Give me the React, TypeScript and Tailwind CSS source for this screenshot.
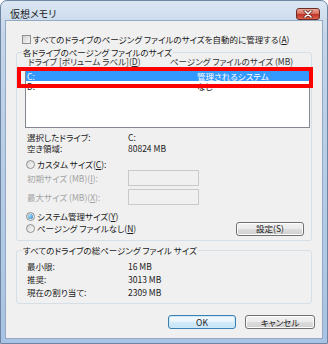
import React from 'react';

const jp = "font-['Noto_Sans_CJK_JP','Noto_Sans',sans-serif] [font-feature-settings:'palt']";

const Radio: React.FC<{ checked?: boolean }> = ({ checked }) => (
  <span className="w-[9px] h-[9px] shrink-0 rounded-full border border-[#8e8f8f] bg-[linear-gradient(135deg,#d6d6d6,#fbfbfb)] flex items-center justify-center">
    {checked && (
      <span className="w-[5px] h-[5px] rounded-full bg-[radial-gradient(circle_at_35%_35%,#a8e4ff,#1a6fc4)]" />
    )}
  </span>
);

const Button: React.FC<{ label: string; primary?: boolean; className?: string }> = ({ label, primary, className }) => (
  <div
    className={`h-[14px] rounded-[3px] border flex items-center justify-center text-[8.5px] text-[#1a1a1a] ${
      primary
        ? 'border-[#3c7fb1] bg-[linear-gradient(#f4fafd_0%,#e6f3fb_50%,#d3ebf9_50%,#c6e4f6_100%)] shadow-[inset_0_0_0_1px_#cde9f9]'
        : 'border-[#707070] bg-[linear-gradient(#f2f2f2_0%,#ebebeb_50%,#dddddd_50%,#cfcfcf_100%)] shadow-[inset_0_0_0_1px_#fcfcfc]'
    } ${className ?? ''}`}
  >
    {label}
  </div>
);

const GroupLabel: React.FC<{ text: string }> = ({ text }) => (
  <div className="-mt-[6px] ml-[5px] w-fit h-[10px] leading-[10px] px-[1px] bg-[#f0f0f0] text-[8.5px] text-[#1a1a1a]">{text}</div>
);

export default function App() {
  return (
    <div className={`w-[328px] h-[344px] ${jp}`}>
      <div className="w-full h-full flex flex-col rounded-t-[7px] border border-[#6f86a3] bg-[linear-gradient(180deg,#dbe6f2_0%,#c3d5ea_10%,#b3cbe6_60%,#a8c3e3_100%)]">
        {/* title bar */}
        <div className="h-[20px] shrink-0 flex items-start justify-between pt-[7px]">
          <span className="ml-[9px] h-[12px] leading-[12px] text-[10px] text-[#1e1e1e]">仮想メモリ</span>
          <div className="mr-[7px] w-[24px] h-[12px] rounded-[3px] border border-[#6d2a23] bg-[linear-gradient(#e9a99c_0%,#d9705e_45%,#c2352a_55%,#d8624c_100%)] flex items-center justify-center">
            <svg width="10" height="8" viewBox="0 0 10 8">
              <path d="M2 1 L8 7 M8 1 L2 7" stroke="#5a1d16" strokeWidth="3" strokeLinecap="round" />
              <path d="M2 1 L8 7 M8 1 L2 7" stroke="#ffffff" strokeWidth="1.6" strokeLinecap="round" />
            </svg>
          </div>
        </div>

        {/* client area */}
        <div className="flex-1 mx-[5px] mb-[5px] bg-[#f0f0f0] shadow-[0_0_0_1px_#94a9c3] flex flex-col text-[8.5px] text-[#1a1a1a] relative">
          <div className="mt-[12px] ml-[16px] h-[12px] flex items-center gap-[2px]">
            <span className="w-[9px] h-[9px] border border-[#8f8f8f] bg-[linear-gradient(135deg,#d2d2d2,#f6f6f6)]" />
            <span>すべてのドライブのページング ファイルのサイズを自動的に管理する(<u>A</u>)</span>
          </div>

          {/* group 1 */}
          <div className="mt-[7px] ml-[10px] mr-[10px] h-[189px] border border-[#d5dfe5] rounded-[3px] flex flex-col">
            <GroupLabel text="各ドライブのページング ファイルのサイズ" />
            <div className="h-[9px] leading-[9px] flex items-center pl-[11px] text-[#333]">
              <span className="w-[142px]">ドライブ [ボリューム ラベル](<u>D</u>)</span>
              <span>ページング ファイルのサイズ (MB)</span>
            </div>
            <div className="mt-[2px] ml-[8px] mr-[1px] h-[60px] border border-[#828790] bg-white flex flex-col">
              <div className="mt-[2px] h-[10px] flex items-center bg-[#3399ff] text-white pl-[1px]">
                <span className="w-[170px]">C:</span>
                <span>管理されるシステム</span>
              </div>
              <div className="h-[10px] flex items-center pl-[1px]">
                <span className="w-[170px]">D:</span>
                <span>なし</span>
              </div>
            </div>

            <div className="mt-[3px] h-[12px] flex items-center pl-[10px]">
              <span className="w-[101px]">選択したドライブ:</span>
              <span>C:</span>
            </div>
            <div className="h-[11px] flex items-center pl-[10px]">
              <span className="w-[101px]">空き領域:</span>
              <span>80824 MB</span>
            </div>

            <div className="mt-[4px] h-[12px] flex items-center pl-[9px] gap-[2px]">
              <Radio />
              <span>カスタム サイズ(<u>C</u>):</span>
            </div>
            <div className="h-[16px] flex items-center pl-[10px] text-[#a3a3a3]">
              <span className="w-[101px]">初期サイズ (MB)(<u>I</u>):</span>
              <span className="w-[71px] h-[16px] border border-[#c9c9c9] bg-[#f0f0f0]" />
            </div>
            <div className="mt-[3px] h-[16px] flex items-center pl-[10px] text-[#a3a3a3]">
              <span className="w-[101px]">最大サイズ (MB)(<u>X</u>):</span>
              <span className="w-[71px] h-[16px] border border-[#c9c9c9] bg-[#f0f0f0]" />
            </div>

            <div className="mt-[6px] h-[11px] flex items-center pl-[9px] gap-[2px]">
              <Radio checked />
              <span>システム管理サイズ(<u>Y</u>)</span>
            </div>
            <div className="h-[13px] flex items-center justify-between pl-[9px] pr-[7px]">
              <div className="flex items-center gap-[2px]">
                <Radio />
                <span>ページング ファイルなし(<u>N</u>)</span>
              </div>
              <Button label="設定(S)" className="w-[68px]" />
            </div>
          </div>

          {/* group 2 */}
          <div className="mt-[9px] ml-[10px] mr-[10px] h-[54px] border border-[#d5dfe5] rounded-[3px] flex flex-col">
            <GroupLabel text="すべてのドライブの総ページング ファイル サイズ" />
            <div className="mt-[5px] h-[13px] flex items-center pl-[10px]">
              <span className="w-[101px]">最小限:</span>
              <span>16 MB</span>
            </div>
            <div className="h-[13px] flex items-center pl-[10px]">
              <span className="w-[101px]">推奨:</span>
              <span>3013 MB</span>
            </div>
            <div className="h-[13px] flex items-center pl-[10px]">
              <span className="w-[101px]">現在の割り当て:</span>
              <span>2309 MB</span>
            </div>
          </div>

          <div className="mt-[11px] mr-[7px] flex justify-end gap-[9px]">
            <Button label="OK" primary className="w-[68px]" />
            <Button label="キャンセル" className="w-[70px]" />
          </div>

          {/* red highlight frame */}
          <div className="absolute left-[11px] top-[46px] w-[296px] h-[21px] border-[4px] border-[#ff0000]" />
        </div>
      </div>
    </div>
  );
}
